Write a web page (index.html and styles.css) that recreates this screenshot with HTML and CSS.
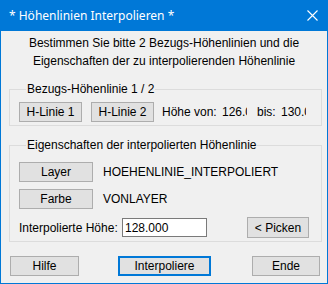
FILE: index.html
```html
<!DOCTYPE html>
<html lang="de">
<head>
    <meta charset="UTF-8">
    <meta name="viewport" content="width=device-width, initial-scale=1.0">
    <title>Höhenlinien Interpolieren</title>
    <link rel="stylesheet" href="styles.css">
</head>
<body>

    <div class="window">
        <div class="titlebar">
            <span class="title">* Höhenlinien Interpolieren *</span>
            <svg class="close" width="11" height="11" viewBox="0 0 11 11">
                <path d="M0.5 0.5 L10.5 10.5 M10.5 0.5 L0.5 10.5" stroke="#fff" stroke-width="1.1" fill="none"/>
            </svg>
        </div>

        <div class="content">
            <p class="intro">Bestimmen Sie bitte 2 Bezugs-Höhenlinien und die<br>Eigenschaften der zu interpolierenden Höhenlinie</p>

            <fieldset class="group group-ref">
                <legend>Bezugs-Höhenlinie 1 / 2</legend>
                <div class="row">
                    <div class="button btn-line">H-Linie 1</div>
                    <div class="button btn-line">H-Linie 2</div>
                    <span class="label label-from">Höhe von:</span>
                    <span class="value">126.000</span>
                    <span class="label label-to">bis:</span>
                    <span class="value">130.000</span>
                </div>
            </fieldset>

            <fieldset class="group group-props">
                <legend>Eigenschaften der interpolierten Höhenlinie</legend>
                <div class="row">
                    <div class="button btn-prop">Layer</div>
                    <span class="prop-text">HOEHENLINIE_INTERPOLIERT</span>
                </div>
                <div class="row row-color">
                    <div class="button btn-prop">Farbe</div>
                    <span class="prop-text">VONLAYER</span>
                </div>
                <div class="row row-height">
                    <span class="label label-height">Interpolierte Höhe:</span>
                    <input class="input" type="text" value="128.000">
                    <div class="button btn-pick">&lt; Picken</div>
                </div>
            </fieldset>

            <div class="actions">
                <div class="button btn-help">Hilfe</div>
                <div class="button btn-main">Interpoliere</div>
                <div class="button btn-end">Ende</div>
            </div>
        </div>
    </div>

</body>
</html>
```

FILE: styles.css
```css
body {
    margin: 0;
    background-color: #f0f0f0;
    font-family: "Liberation Sans", Arial, sans-serif;
    font-size: 12px;
    color: #000;
}

.window {
    width: 328px;
    height: 284px;
    box-sizing: border-box;
    border: 1px solid #0078d7;
    border-top: none;
    background-color: #f0f0f0;
}

.titlebar {
    height: 31px;
    margin: 0 -1px;
    padding: 0 10px 0 9px;
    display: flex;
    align-items: center;
    justify-content: space-between;
    background-color: #0078d7;
    color: #fff;
}

.title {
    font-family: "Noto Sans", sans-serif;
    font-size: 12px;
    padding-bottom: 1px;
}

.close {
    display: block;
}

.content {
    padding: 0 0 0 8px;
}

.intro {
    margin: 3px 0 0 -8px;
    text-align: center;
    line-height: 18px;
}

.group {
    margin: 12px 0 0 0;
    width: 313px;
    box-sizing: border-box;
    border: 1px solid #dcdcdc;
    padding: 6px 0 3px 9px;
}

.group legend {
    padding: 0 1px;
    margin-left: 7px;
    line-height: 14px;
}

.group-props {
    padding-top: 10px;
}

.row {
    display: flex;
    align-items: center;
    height: 20px;
}

.row-color {
    margin-top: 7px;
}

.row-height {
    margin-top: 8px;
    height: 21px;
}

.button {
    height: 20px;
    box-sizing: border-box;
    display: flex;
    align-items: center;
    justify-content: center;
    background-color: #e1e1e1;
    border: 1px solid #adadad;
}

.btn-line {
    width: 63px;
    margin-right: 9px;
}

.label-from {
    width: 60px;
    margin-left: -1px;
}

.value {
    width: 25px;
    overflow: hidden;
    white-space: nowrap;
}

.label-to {
    width: 24px;
    margin-left: 10px;
}

.btn-prop {
    width: 74px;
}

.prop-text {
    margin-left: 10px;
}

.label-height {
    width: 103px;
}

.input {
    width: 85px;
    height: 19px;
    box-sizing: border-box;
    margin: 0;
    padding: 0 2px;
    border: 1px solid #7a7a7a;
    background-color: #fff;
    font-family: "Liberation Sans", Arial, sans-serif;
    font-size: 12px;
    color: #000;
}

.btn-pick {
    width: 62px;
    height: 21px;
    margin-left: 40px;
    align-self: flex-start;
}

.actions {
    display: flex;
    margin: 14px 0 0 1px;
}

.btn-help {
    width: 69px;
}

.btn-main {
    width: 93px;
    margin-left: 39px;
    border: 2px solid #0078d7;
}

.btn-end {
    width: 68px;
    margin-left: 41px;
}
```
